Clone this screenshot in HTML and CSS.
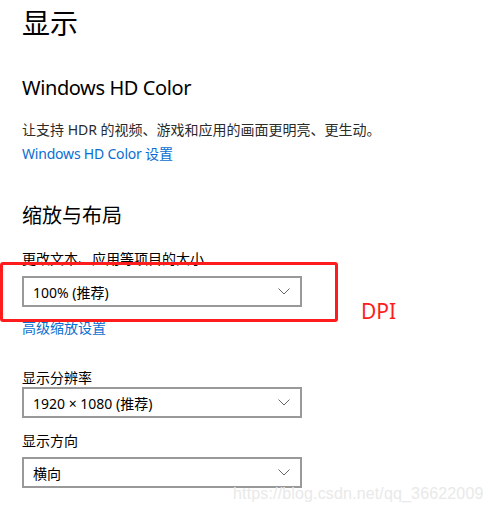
FILE: index.html
```html
<!DOCTYPE html>
<html lang="zh-CN">
<head>
    <meta charset="UTF-8">
    <title>显示</title>
    <link rel="stylesheet" href="styles.css">
</head>
<body>
    <div class="page">
        <h1 class="title">显示</h1>

        <h2 class="section hdr">Windows HD Color</h2>
        <p class="desc">让支持 HDR 的视频、游戏和应用的画面更明亮、更生动。</p>
        <a class="link" href="#">Windows HD Color 设置</a>

        <h2 class="section scale">缩放与布局</h2>
        <div class="label first">更改文本、应用等项目的大小</div>
        <div class="select">
            <span>100% (推荐)</span>
            <svg class="chevron" width="12" height="7" viewBox="0 0 12 7"><path d="M0.5 0.5 L6 6 L11.5 0.5" fill="none" stroke="#666" stroke-width="1"/></svg>
        </div>
        <a class="link after-select" href="#">高级缩放设置</a>

        <div class="label res">显示分辨率</div>
        <div class="select">
            <span>1920 × 1080 (推荐)</span>
            <svg class="chevron" width="12" height="7" viewBox="0 0 12 7"><path d="M0.5 0.5 L6 6 L11.5 0.5" fill="none" stroke="#666" stroke-width="1"/></svg>
        </div>

        <div class="label orient">显示方向</div>
        <div class="select">
            <span>横向</span>
            <svg class="chevron" width="12" height="7" viewBox="0 0 12 7"><path d="M0.5 0.5 L6 6 L11.5 0.5" fill="none" stroke="#666" stroke-width="1"/></svg>
        </div>
    </div>

    <!-- annotation on top of the screenshot -->
    <div class="mark"></div>
    <div class="mark-text">DPI</div>
    <div class="watermark">https://blog.csdn.net/qq_36622009</div>
</body>
</html>
```

FILE: styles.css
```css
body {
    margin: 0;
    background: #fff;
    font-family: "Noto Sans", "Noto Sans CJK SC", sans-serif;
    color: #000;
}

.page {
    padding: 5px 0 0 22px;
}

.title {
    margin: 0;
    font-size: 28px;
    font-weight: normal;
    line-height: 36px;
}

.section {
    margin: 0;
    font-size: 20px;
    font-weight: normal;
    line-height: 28px;
}

.hdr {
    margin-top: 33px;
    letter-spacing: -0.4px;
}

.scale {
    margin-top: 38px;
}

.desc {
    margin: 18px 0 0;
    font-size: 14px;
    line-height: 20px;
    color: #2a2a2a;
}

.link {
    display: block;
    margin-top: 4px;
    font-size: 14px;
    line-height: 20px;
    color: #0a6ed1;
    text-decoration: none;
    letter-spacing: -0.2px;
}

.link.after-select {
    margin-top: 11px;
    letter-spacing: 0;
}

.label {
    font-size: 14px;
    line-height: 18px;
}

.label.first {
    margin-top: 20px;
}

.label.res {
    margin-top: 31px;
}

.label.orient {
    margin-top: 14px;
}

.select {
    box-sizing: border-box;
    width: 280px;
    height: 31px;
    margin-top: 8px;
    padding: 0 10px 0 9px;
    border: 2px solid #999;
    display: flex;
    align-items: center;
    justify-content: space-between;
    font-size: 14px;
}

.label.res + .select {
    margin-top: 0;
}

.label.orient + .select {
    margin-top: 7px;
}

.mark {
    position: absolute;
    left: 0;
    top: 262px;
    width: 338px;
    height: 60px;
    box-sizing: border-box;
    border: 3px solid #ff1c1c;
    border-radius: 3px;
}

.mark-text {
    position: absolute;
    left: 361px;
    top: 297px;
    font-size: 21px;
    line-height: 28px;
    color: #ff1c1c;
}

.watermark {
    position: absolute;
    left: 233px;
    top: 485px;
    font-family: "Liberation Sans", Arial, sans-serif;
    font-size: 16px;
    line-height: 18px;
    letter-spacing: 0.15px;
    color: #e9e9e9;
}
```
